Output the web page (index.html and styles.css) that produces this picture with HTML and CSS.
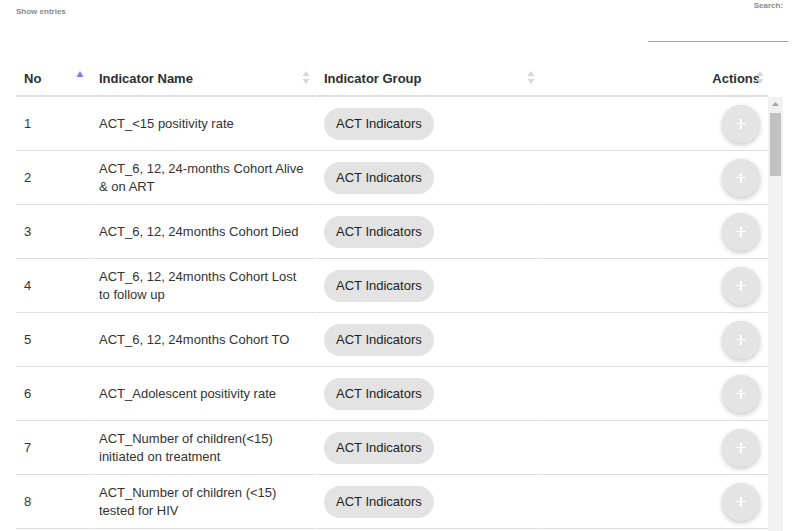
FILE: index.html
```html
<!DOCTYPE html>
<html>
<head>
<meta charset="utf-8">
<link rel="stylesheet" href="styles.css">
</head>
<body>
<div class="toolbar">
  <div class="length">Show entries</div>
  <div class="filter">
    <label class="filter-label">Search:</label>
    <input class="filter-input" type="text">
  </div>
</div>

<div class="table">
  <div class="row head">
    <div class="cell">No<svg class="sort" width="8" height="16" viewBox="0 0 8 16"><path d="M4 2 L7.5 8 L0.5 8 Z" fill="#7b7fe4"/></svg></div>
    <div class="cell">Indicator Name<svg class="sort" width="8" height="16" viewBox="0 0 8 16"><path d="M4 2 L7.5 7 L0.5 7 Z M4 15 L7.5 10 L0.5 10 Z" fill="#d6d6d6"/></svg></div>
    <div class="cell">Indicator Group<svg class="sort" width="8" height="16" viewBox="0 0 8 16"><path d="M4 2 L7.5 7 L0.5 7 Z M4 15 L7.5 10 L0.5 10 Z" fill="#d6d6d6"/></svg></div>
    <div class="cell right">Actions<svg class="sort" width="8" height="16" viewBox="0 0 8 16"><path d="M4 2 L7.5 7 L0.5 7 Z M4 15 L7.5 10 L0.5 10 Z" fill="#d6d6d6"/></svg></div>
  </div>

  <div class="scroll-wrap">
    <div class="body">
      <div class="row"><div class="cell">1</div><div class="cell">ACT_&lt;15 positivity rate</div><div class="cell"><span class="chip">ACT Indicators</span></div><div class="cell right"><button class="fab"></button></div></div>
      <div class="row"><div class="cell">2</div><div class="cell">ACT_6, 12, 24-months Cohort Alive &amp; on ART</div><div class="cell"><span class="chip">ACT Indicators</span></div><div class="cell right"><button class="fab"></button></div></div>
      <div class="row"><div class="cell">3</div><div class="cell">ACT_6, 12, 24months Cohort Died</div><div class="cell"><span class="chip">ACT Indicators</span></div><div class="cell right"><button class="fab"></button></div></div>
      <div class="row"><div class="cell">4</div><div class="cell">ACT_6, 12, 24months Cohort Lost to follow up</div><div class="cell"><span class="chip">ACT Indicators</span></div><div class="cell right"><button class="fab"></button></div></div>
      <div class="row"><div class="cell">5</div><div class="cell">ACT_6, 12, 24months Cohort TO</div><div class="cell"><span class="chip">ACT Indicators</span></div><div class="cell right"><button class="fab"></button></div></div>
      <div class="row"><div class="cell">6</div><div class="cell">ACT_Adolescent positivity rate</div><div class="cell"><span class="chip">ACT Indicators</span></div><div class="cell right"><button class="fab"></button></div></div>
      <div class="row"><div class="cell">7</div><div class="cell">ACT_Number of children(&lt;15) initiated on treatment</div><div class="cell"><span class="chip">ACT Indicators</span></div><div class="cell right"><button class="fab"></button></div></div>
      <div class="row"><div class="cell">8</div><div class="cell">ACT_Number of children (&lt;15) tested for HIV</div><div class="cell"><span class="chip">ACT Indicators</span></div><div class="cell right"><button class="fab"></button></div></div>
    </div>
    <div class="rail">
      <div class="rail-btn"><svg width="7" height="4" viewBox="0 0 7 4"><path d="M3.5 0 L7 4 L0 4 Z" fill="#a3a3a3"/></svg></div>
      <div class="rail-thumb"></div>
    </div>
  </div>
</div>
</body>
</html>
```

FILE: styles.css
```css
html, body {
  margin: 0;
  padding: 0;
  background: #fff;
  overflow: hidden;
  font-family: "Liberation Sans", Arial, sans-serif;
  color: #333;
}

.toolbar {
  display: flex;
  justify-content: space-between;
  height: 62px;
  padding-left: 16px;
}

.length {
  margin-top: 7px;
  font-size: 8px;
  line-height: 10px;
  font-weight: bold;
  color: #8a8a8a;
}

.filter {
  width: 140px;
  margin-right: 6px;
  display: flex;
  flex-direction: column;
  align-items: stretch;
}

.filter-label {
  margin-top: 1px;
  padding-right: 5px;
  text-align: right;
  font-size: 8px;
  line-height: 10px;
  font-weight: bold;
  color: #8a8a8a;
}

.filter-input {
  box-sizing: border-box;
  height: 31px;
  margin: 0;
  padding: 0;
  border: none;
  border-bottom: 1px solid #9e9e9e;
  outline: none;
  background: transparent;
}

.table {
  margin-left: 16px;
  width: 767px;
}

.row {
  display: grid;
  grid-template-columns: 74px 225px 224px 226px;
  column-gap: 1px;
  width: 752px;
}

.cell {
  box-sizing: border-box;
  min-height: 54px;
  padding: 0 8px;
  display: flex;
  align-items: center;
  font-size: 13px;
  line-height: 18px;
  border-bottom: 1px solid #dedede;
}

.cell:nth-child(3) {
  padding-left: 7px;
}

.cell.right {
  justify-content: flex-end;
}

.head .cell {
  position: relative;
  min-height: 0;
  height: 35px;
  font-weight: bold;
  color: #2e2e2e;
  border-bottom: 2px solid #dedede;
}

.sort {
  position: absolute;
  right: 6px;
  top: 7px;
}

.head .cell.right .sort {
  right: 4px;
}

.scroll-wrap {
  display: flex;
  height: 434px;
  overflow: hidden;
}

.body {
  width: 752px;
  flex: none;
  overflow: hidden;
}

.rail {
  width: 15px;
  flex: none;
  background: #f1f1f1;
  display: flex;
  flex-direction: column;
  align-items: center;
}

.rail-btn {
  height: 15px;
  width: 15px;
  display: flex;
  align-items: center;
  justify-content: center;
}

.rail-btn svg {
  display: block;
  margin-top: -1px;
}

.rail-thumb {
  width: 11px;
  height: 63px;
  margin-top: 1px;
  background: #c1c1c1;
}

.chip {
  display: inline-flex;
  align-items: center;
  height: 32px;
  padding: 0 12px;
  border-radius: 16px;
  background: #e3e3e3;
  color: #222;
  font-size: 13px;
}

.fab {
  position: relative;
  width: 38px;
  height: 38px;
  border: none;
  border-radius: 50%;
  background: #e4e4e4;
  box-shadow: 0 2px 5px rgba(0, 0, 0, 0.22);
  padding: 0;
}

.fab::before,
.fab::after {
  content: "";
  position: absolute;
  left: 50%;
  top: 50%;
  background: #fff;
}

.fab::before {
  width: 10px;
  height: 1.5px;
  margin-left: -5px;
  margin-top: -0.75px;
}

.fab::after {
  width: 1.5px;
  height: 10px;
  margin-left: -0.75px;
  margin-top: -5px;
}
```
